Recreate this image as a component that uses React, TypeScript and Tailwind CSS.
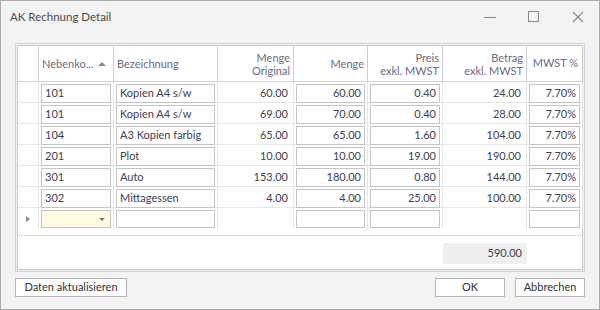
import React from 'react';

type Row = {
  konto: string;
  text: string;
  orig: string;
  menge: string;
  preis: string;
  betrag: string;
  mwst: string;
};

const rows: Row[] = [
  { konto: '101', text: 'Kopien A4 s/w', orig: '60.00', menge: '60.00', preis: '0.40', betrag: '24.00', mwst: '7.70%' },
  { konto: '101', text: 'Kopien A4 s/w', orig: '69.00', menge: '70.00', preis: '0.40', betrag: '28.00', mwst: '7.70%' },
  { konto: '104', text: 'A3 Kopien farbig', orig: '65.00', menge: '65.00', preis: '1.60', betrag: '104.00', mwst: '7.70%' },
  { konto: '201', text: 'Plot', orig: '10.00', menge: '10.00', preis: '19.00', betrag: '190.00', mwst: '7.70%' },
  { konto: '301', text: 'Auto', orig: '153.00', menge: '180.00', preis: '0.80', betrag: '144.00', mwst: '7.70%' },
  { konto: '302', text: 'Mittagessen', orig: '4.00', menge: '4.00', preis: '25.00', betrag: '100.00', mwst: '7.70%' },
];

const cols = 'grid grid-cols-[21px_75px_104px_76px_74px_75px_84px_56px]';

// editierbare Zelle mit Rahmen
function Box({ value, right, yellow }: { value?: string; right?: boolean; yellow?: boolean }) {
  return (
    <div className="h-full border-r border-[#e6e6e6] px-[2px] py-[2px]">
      <div
        className={`relative flex h-full items-center border border-[#c4c4c4] px-[3px] ${
          right ? 'justify-end' : 'justify-start'
        } ${yellow ? 'bg-[#fffbe0]' : 'bg-white'}`}
      >
        {value}
        {yellow && (
          <span className="absolute right-[5px] top-[7px] h-0 w-0 border-x-[3px] border-t-[3px] border-x-transparent border-t-[#7a7a7a]" />
        )}
      </div>
    </div>
  );
}

function Plain({ value }: { value?: string }) {
  return (
    <div className="flex h-full items-center justify-end border-r border-[#e6e6e6] pr-[5px]">{value}</div>
  );
}

function Head({ lines, right, sort }: { lines: string[]; right?: boolean; sort?: boolean }) {
  return (
    <div
      className={`flex h-full items-center border-r border-[#cfcfcf] px-[3px] ${
        right ? 'justify-end text-right' : 'justify-between'
      }`}
    >
      <div className="leading-[13px]">
        {lines.map((l) => (
          <div key={l}>{l}</div>
        ))}
      </div>
      {sort && (
        <span className="mr-[4px] h-0 w-0 border-x-[4px] border-b-[4px] border-x-transparent border-b-[#8a8a8a]" />
      )}
    </div>
  );
}

export default function App() {
  return (
    <div
      className="relative h-[310px] w-[600px] border border-[#acacac] bg-[#f3f3f3] text-[11px] text-[#40404f]"
      style={{ fontFamily: 'Lato, "Liberation Sans", sans-serif' }}
    >
      {/* Titelleiste */}
      <div className="flex h-[32px] items-center justify-between pl-[9px] pr-[14px] text-[11.5px] text-[#4a4a4a]">
        <span>AK Rechnung Detail</span>
        <div className="flex items-center gap-[30px]">
          <svg width="14" height="14" viewBox="0 0 14 14">
            <line x1="1" y1="7.5" x2="13" y2="7.5" stroke="#8a8a8a" strokeWidth="1" />
          </svg>
          <svg width="14" height="14" viewBox="0 0 14 14">
            <rect x="1.5" y="1.5" width="10" height="10" fill="none" stroke="#8a8a8a" strokeWidth="1" />
          </svg>
          <svg width="14" height="14" viewBox="0 0 14 14">
            <path d="M2 2 L12 12 M12 2 L2 12" stroke="#8a8a8a" strokeWidth="1.1" />
          </svg>
        </div>
      </div>

      {/* Tabelle */}
      <div className="mx-[14px] mt-[10px] border border-[#d2d2d2] p-[1px]">
        <div className="flex h-[225px] flex-col border border-[#c8c8c8] bg-white">
          <div className={`${cols} h-[36px] border-b border-[#d4d4d4] text-[#6a6a82]`}>
            <Head lines={['']} />
            <Head lines={['Nebenko...']} sort />
            <Head lines={['Bezeichnung']} />
            <Head lines={['Menge', 'Original']} right />
            <Head lines={['Menge']} right />
            <Head lines={['Preis', 'exkl. MWST']} right />
            <Head lines={['Betrag', 'exkl. MWST']} right />
            <div className="flex h-full items-center justify-end pr-[5px]">MWST %</div>
          </div>

          {rows.map((r, i) => (
            <div key={i} className={`${cols} h-[21px] border-b border-[#e6e6e6]`}>
              <div className="border-r border-[#e6e6e6]" />
              <Box value={r.konto} />
              <Box value={r.text} />
              <Plain value={r.orig} />
              <Box value={r.menge} right />
              <Box value={r.preis} right />
              <Plain value={r.betrag} />
              <Box value={r.mwst} right />
            </div>
          ))}

          {/* neue Zeile */}
          <div className={`${cols} h-[22px]`}>
            <div className="flex items-center justify-center border-r border-[#e6e6e6]">
              <span className="h-0 w-0 border-y-[3.5px] border-l-[4px] border-y-transparent border-l-[#8a8a8a]" />
            </div>
            <Box yellow />
            <Box />
            <Plain />
            <Box right />
            <Box right />
            <Plain />
            <Box right />
          </div>

          <div className="h-[6px] border-b border-[#dcdcdc]" />

          {/* Summe */}
          <div className={`${cols} flex-1 pt-[7px]`}>
            <div className="col-span-6" />
            <div className="flex h-[21px] items-center justify-end bg-[#efefef] pr-[5px]">590.00</div>
          </div>
        </div>
      </div>

      {/* Buttons */}
      <div className="mx-[14px] mt-[6px] flex items-center justify-between text-[#333]">
        <button className="h-[19px] w-[112px] border border-[#b4b4b4] bg-white">Daten aktualisieren</button>
        <div className="flex gap-[10px]">
          <button className="h-[19px] w-[70px] border border-[#b4b4b4] bg-white">OK</button>
          <button className="h-[19px] w-[70px] border border-[#b4b4b4] bg-white">Abbrechen</button>
        </div>
      </div>
    </div>
  );
}
